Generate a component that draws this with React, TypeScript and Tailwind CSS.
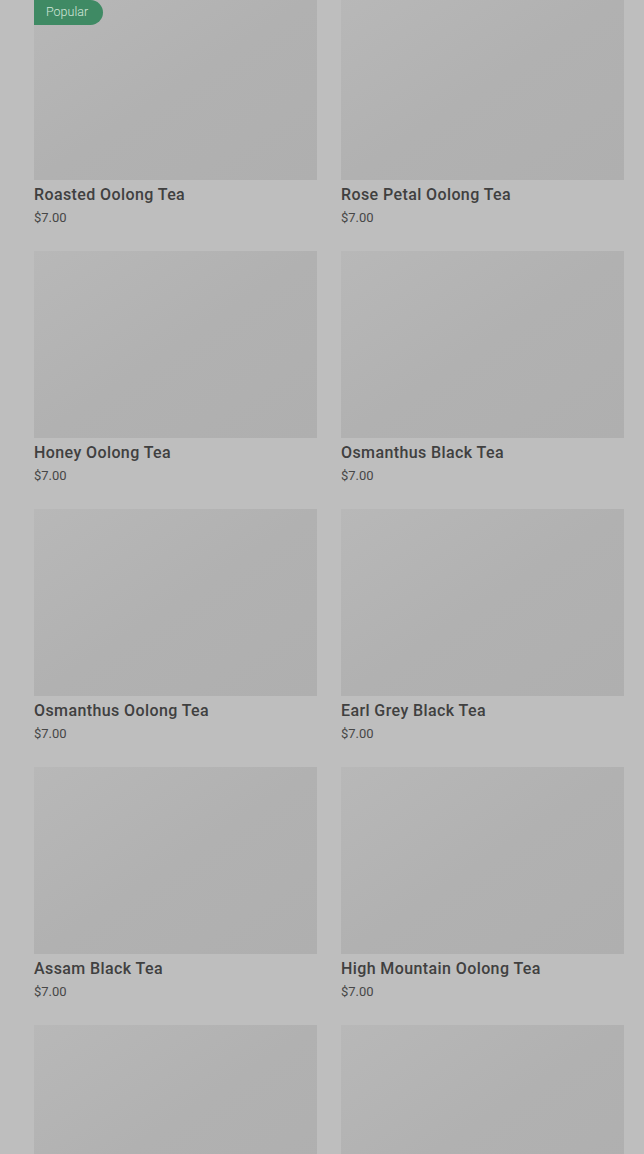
const PRODUCTS = [
  { name: "Roasted Oolong Tea", price: "$7.00", badge: "Popular" },
  { name: "Rose Petal Oolong Tea", price: "$7.00" },
  { name: "Honey Oolong Tea", price: "$7.00" },
  { name: "Osmanthus Black Tea", price: "$7.00" },
  { name: "Osmanthus Oolong Tea", price: "$7.00" },
  { name: "Earl Grey Black Tea", price: "$7.00" },
  { name: "Assam Black Tea", price: "$7.00" },
  { name: "High Mountain Oolong Tea", price: "$7.00" },
];

function Thumb({ badge }: { badge?: string }) {
  return (
    <div className="relative h-[187px] bg-gradient-to-br from-[#b8b8b8] via-[#b1b1b1] to-[#afafaf]">
      {badge && (
        <span className="absolute left-0 top-[7px] flex h-[25px] items-center rounded-r-full bg-[#3f8a64] pl-3 pr-[15px] text-[12.5px] font-light text-[#d3e6da]">
          {badge}
        </span>
      )}
    </div>
  );
}

export default function App() {
  return (
    <div className="h-[1154px] overflow-hidden bg-[#bebebe] font-['Roboto',sans-serif]">
      <div className="mt-[-7px] grid grid-cols-2 gap-x-6 pl-[34px] pr-[20px]">
        {PRODUCTS.map((p) => (
          <article key={p.name} className="h-[258px]">
            <Thumb badge={p.badge} />
            <h3 className="mt-[3px] text-[16px] leading-6 font-medium tracking-[0.025em] text-[#404040]">{p.name}</h3>
            <p className="mt-[1px] text-[13px] leading-5 text-[#474747]">{p.price}</p>
          </article>
        ))}
        <Thumb />
        <Thumb />
      </div>
    </div>
  );
}
